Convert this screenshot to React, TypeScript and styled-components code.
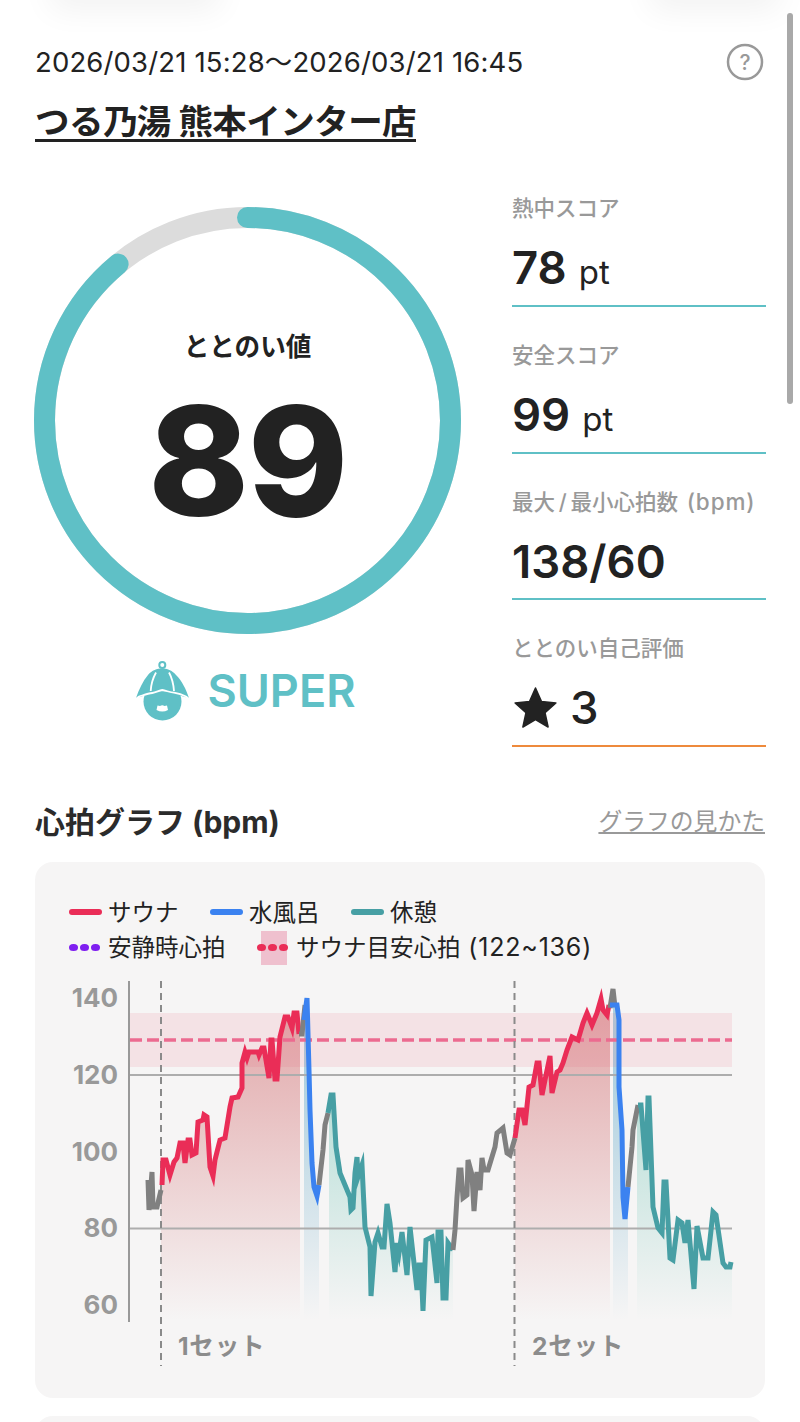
import styled, { createGlobalStyle } from 'styled-components'

const FONT = `Inter, "Noto Sans CJK JP", sans-serif`
const TEAL = '#5fc0c6'

const GlobalStyle = createGlobalStyle`
  html, body {
    margin: 0;
    padding: 0;
    background: #fff;
  }
  body {
    font-family: ${FONT};
    color: #222;
  }
`

const Page = styled.div`
  position: relative;
  width: 800px;
  height: 1422px;
  overflow: hidden;
  background: #fff;
  box-sizing: border-box;
  padding: 0 35px;
`
const TopShade = styled.div<{ $left: number; $width: number }>`
  position: absolute;
  top: -30px;
  left: ${p => p.$left}px;
  width: ${p => p.$width}px;
  height: 40px;
  background: #000;
  opacity: 0.05;
  filter: blur(16px);
`
const ScrollThumb = styled.div`
  position: absolute;
  top: 13px;
  left: 787px;
  width: 6px;
  height: 391px;
  border-radius: 3px;
  background: #a9a9a9;
`
const DateRow = styled.div`
  display: flex;
  align-items: center;
  justify-content: space-between;
  padding-top: 44px;
  height: 36px;
`
const DateText = styled.div`
  font-size: 27.5px;
  line-height: 36px;
  letter-spacing: 0.15px;
  white-space: nowrap;
  color: #222;
`
const HelpIcon = styled.svg`
  width: 38px;
  height: 38px;
  margin-right: 1px;
`
const StoreName = styled.a`
  display: block;
  width: fit-content;
  margin-top: 18px;
  padding-top: 4px;
  font-size: 34.5px;
  line-height: 40px;
  font-weight: 700;
  letter-spacing: -0.55px;
  color: #222;
  white-space: nowrap;
  border-bottom: 3px solid #222;
  height: 44px;
  box-sizing: border-box;
`
const Summary = styled.div`
  display: flex;
  justify-content: space-between;
  margin-top: 50px;
`
const RingColumn = styled.div`
  width: 427px;
  margin-left: -1px;
  padding-top: 15px;
  display: flex;
  flex-direction: column;
  align-items: center;
`
const RingBox = styled.div`
  position: relative;
  width: 427px;
  height: 427px;
`
const RingSvg = styled.svg`
  display: block;
  width: 427px;
  height: 427px;
`
const RingContent = styled.div`
  position: absolute;
  inset: 0;
  display: flex;
  flex-direction: column;
  align-items: center;
`
const RingLabel = styled.div`
  margin-top: 122px;
  font-size: 25.6px;
  line-height: 36px;
  font-weight: 700;
  color: #222;
`
const RingValue = styled.div`
  margin-top: 36px;
  font-size: 152px;
  line-height: 120px;
  font-weight: 800;
  letter-spacing: -1.5px;
  color: #222;
`
const Rank = styled.div`
  display: flex;
  align-items: center;
  gap: 17px;
  margin-top: 26px;
  margin-right: 3px;
`
const RankText = styled.div`
  font-size: 45px;
  line-height: 62px;
  font-weight: 600;
  color: ${TEAL};
`
const Scores = styled.div`
  width: 254px;
  margin-right: -1px;
  display: flex;
  flex-direction: column;
`
const Score = styled.div<{ $line: string }>`
  height: 146.5px;
  box-sizing: border-box;
  border-bottom: 2px solid ${p => p.$line};
  padding-top: 33px;
  &:first-child {
    height: 115px;
    padding-top: 1px;
  }
`
const ScoreLabel = styled.div`
  font-size: 21.5px;
  line-height: 30px;
  font-weight: 500;
  color: #999;
  white-space: nowrap;
`
const ScoreLabelUnit = styled.span`
  margin-left: 3px;
  font-size: 22.5px;
  letter-spacing: 0.9px;
`
const ScoreValue = styled.div`
  display: flex;
  align-items: baseline;
  gap: 12px;
  margin-top: 17px;
  font-size: 45.5px;
  line-height: 56px;
  font-weight: 600;
  color: #222;
`
const ScoreUnit = styled.span`
  font-size: 33px;
  font-weight: 400;
`
const StarValue = styled(ScoreValue)`
  align-items: center;
  gap: 13px;
  padding-left: 2px;
  font-weight: 500;
`
const GraphHead = styled.div`
  display: flex;
  align-items: center;
  justify-content: space-between;
  margin-top: 55px;
  height: 40px;
`
const GraphTitle = styled.h2`
  margin: 0;
  font-size: 30px;
  line-height: 40px;
  font-weight: 700;
  color: #2b2b2b;
`
const GraphLink = styled.a`
  font-size: 23.8px;
  line-height: 32px;
  color: #999;
  text-decoration: underline;
`
const GraphCard = styled.section`
  margin-top: 20px;
  height: 536px;
  border-radius: 18px;
  background: #f6f5f5;
  padding-top: 33px;
  box-sizing: border-box;
`
const NextCard = styled.div`
  margin-top: 18px;
  height: 60px;
  border-radius: 18px;
  background: #f6f5f5;
`
const Legend = styled.div`
  display: flex;
  flex-direction: column;
  padding-left: 34px;
`
const LegendRow = styled.div`
  display: flex;
  align-items: center;
  height: 35px;
`
const LegendItem = styled.div<{ $width: number }>`
  display: flex;
  align-items: center;
  width: ${p => p.$width}px;
  font-size: 23.5px;
  line-height: 35px;
  color: #222;
  white-space: nowrap;
`
const LegendRange = styled.span`
  font-size: 25px;
  letter-spacing: 0.8px;
  white-space: pre;
`
const LegendBar = styled.span<{ $color: string }>`
  width: 33px;
  height: 6px;
  margin-right: 6px;
  border-radius: 3px;
  background: ${p => p.$color};
`
const LegendDots = styled.span<{ $color: string; $band?: boolean }>`
  position: relative;
  display: flex;
  gap: 2.5px;
  width: 31px;
  margin-right: 8px;
  color: ${p => p.$color};
  ${p => p.$band && `
    &::before {
      content: '';
      position: absolute;
      left: 4px;
      top: -13px;
      width: 26px;
      height: 34px;
      background: #efc0ce;
    }
  `}
`
const Dot = styled.i`
  position: relative;
  width: 8.5px;
  height: 7px;
  border-radius: 50%;
  background: currentColor;
`
const ChartSvg = styled.svg`
  display: block;
  width: 730px;
  height: 400px;
  margin-top: 10px;
`
const AxisText = styled.text`
  font-family: ${FONT};
  font-size: 26px;
  font-weight: 700;
  fill: #999;
  text-anchor: end;
`
const SetText = styled.text`
  font-family: ${FONT};
  font-size: 24.5px;
  font-weight: 700;
  letter-spacing: 0.8px;
  fill: #8c8c8c;
`

type Pt = [number, number]
type Seg = { color: string; pts: Pt[]; fill?: { x0: number; x1: number; id: string } }

const RED = '#ea2d57'
const BLUE = '#3b82f0'
const GREEN = '#479fa4'
const GRAY = '#808080'
const BOTTOM = 1320

const segments: Seg[] = [
  { color: GRAY, pts: [[148, 1180], [149, 1210], [152, 1172], [153, 1207], [157, 1207], [161, 1190]] },
  {
    color: RED,
    fill: { x0: 161, x1: 300, id: 'fillRed' },
    pts: [[162, 1185], [163, 1160], [166, 1160], [170, 1175], [174, 1162], [177, 1158], [180, 1143], [183, 1143], [185, 1163],
      [188, 1140], [190, 1140], [192, 1155], [196, 1153], [198, 1122], [203, 1120], [204, 1115], [207, 1117], [210, 1167],
      [213, 1176], [215, 1160], [220, 1140], [225, 1138], [230, 1107], [232, 1098], [238, 1097], [242, 1088], [242, 1063],
      [245, 1052], [247, 1058], [249, 1052], [258, 1052], [259, 1055], [262, 1048], [264, 1048], [269, 1078], [271, 1040],
      [272, 1040], [275, 1079], [277, 1079], [280, 1037], [285, 1017], [288, 1017], [292, 1028], [294, 1013], [297, 1013], [299, 1034]],
  },
  { color: GRAY, pts: [[299, 1034], [302, 1034], [305, 1005]] },
  {
    color: BLUE,
    fill: { x0: 304, x1: 319, id: 'fillBlue' },
    pts: [[304, 1020], [307, 998], [309, 1070], [310, 1110], [312, 1163], [314, 1187], [317, 1196], [319, 1185]],
  },
  { color: GRAY, pts: [[319, 1185], [323, 1150], [325, 1125], [328, 1113]] },
  {
    color: GREEN,
    fill: { x0: 329, x1: 453, id: 'fillGreen' },
    pts: [[328, 1113], [331, 1095], [333, 1095], [336, 1147], [340, 1173], [350, 1197], [351, 1210], [353, 1208], [355, 1173],
      [357, 1157], [358, 1177], [362, 1165], [365, 1227], [370, 1247], [371, 1296], [375, 1242], [378, 1233], [382, 1247],
      [384, 1247], [387, 1204], [390, 1223], [395, 1272], [397, 1243], [399, 1253], [402, 1232], [407, 1275], [410, 1227],
      [417, 1290], [419, 1265], [421, 1265], [423, 1311], [426, 1240], [432, 1237], [437, 1283], [438, 1232], [441, 1232],
      [443, 1298], [446, 1298], [448, 1243], [453, 1250]],
  },
  {
    color: GRAY,
    pts: [[453, 1250], [455, 1230], [457, 1197], [459, 1170], [461, 1170], [463, 1198], [467, 1195], [468, 1160], [472, 1175],
      [474, 1211], [477, 1172], [480, 1190], [482, 1158], [484, 1170], [488, 1170], [495, 1147], [497, 1133], [503, 1128],
      [507, 1153], [510, 1155], [515, 1138]],
  },
  {
    color: RED,
    fill: { x0: 515, x1: 610, id: 'fillRed' },
    pts: [[515, 1138], [519, 1110], [522, 1110], [525, 1125], [529, 1087], [533, 1085], [537, 1063], [539, 1063], [542, 1095],
      [545, 1080], [550, 1056], [552, 1093], [557, 1072], [560, 1070], [563, 1063], [567, 1050], [572, 1037], [578, 1040],
      [583, 1023], [587, 1013], [592, 1025], [597, 1013], [601, 999], [603, 1010], [607, 1015], [609, 1005]],
  },
  { color: GRAY, pts: [[610, 1008], [613, 989], [615, 1007]] },
  {
    color: BLUE,
    fill: { x0: 613, x1: 628, id: 'fillBlue' },
    pts: [[610, 1005], [617, 1005], [619, 1020], [619, 1087], [622, 1130], [623, 1197], [625, 1219], [628, 1187]],
  },
  { color: GRAY, pts: [[628, 1187], [632, 1147], [633, 1130], [638, 1105]] },
  {
    color: GREEN,
    fill: { x0: 637, x1: 732, id: 'fillGreen' },
    pts: [[638, 1105], [641, 1105], [646, 1170], [648, 1098], [649, 1098], [653, 1207], [658, 1228], [662, 1233], [664, 1182],
      [666, 1182], [670, 1258], [673, 1260], [678, 1220], [682, 1223], [685, 1243], [688, 1220], [690, 1243], [694, 1289],
      [697, 1226], [703, 1258], [708, 1258], [713, 1212], [716, 1215], [723, 1263], [726, 1267], [730, 1267], [731, 1262]],
  },
]

const toPoints = (pts: Pt[]) => pts.map(p => p.join(',')).join(' ')

const areaPoints = ({ pts, fill }: Seg) => {
  if (!fill) return ''
  const inside = pts.filter(p => p[0] >= fill.x0 && p[0] <= fill.x1)
  const first = inside[0][1]
  const last = inside[inside.length - 1][1]
  return toPoints([[fill.x0, BOTTOM], [fill.x0, first], ...inside, [fill.x1, last], [fill.x1, BOTTOM]])
}

const yLabels: [string, number][] = [['140', 1007], ['120', 1084], ['100', 1161], ['80', 1237], ['60', 1314]]

const Chart = () => (
  <ChartSvg viewBox="35 975 730 400">
    <defs>
      <linearGradient id="fillRed" gradientUnits="userSpaceOnUse" x1="0" y1="1000" x2="0" y2={BOTTOM}>
        <stop offset="0" stopColor="#c8474b" stopOpacity="0.46" />
        <stop offset="1" stopColor="#c8474b" stopOpacity="0" />
      </linearGradient>
      <linearGradient id="fillBlue" gradientUnits="userSpaceOnUse" x1="0" y1="1060" x2="0" y2={BOTTOM}>
        <stop offset="0" stopColor="#5fa8c8" stopOpacity="0.5" />
        <stop offset="1" stopColor="#5fa8c8" stopOpacity="0" />
      </linearGradient>
      <linearGradient id="fillGreen" gradientUnits="userSpaceOnUse" x1="0" y1="1090" x2="0" y2={BOTTOM}>
        <stop offset="0" stopColor="#5fbfae" stopOpacity="0.42" />
        <stop offset="1" stopColor="#5fbfae" stopOpacity="0" />
      </linearGradient>
    </defs>

    {segments.filter(s => s.fill).map((s, i) => (
      <polygon key={i} points={areaPoints(s)} fill={`url(#${s.fill!.id})`} />
    ))}

    <rect x="130" y="1013" width="602" height="54" fill="#e8647f" fillOpacity="0.13" />
    <line x1="130" y1="1040" x2="732" y2="1040" stroke="#ec6b90" strokeWidth="3.5" strokeDasharray="12 5" />
    <line x1="130" y1="1075" x2="732" y2="1075" stroke="#adadad" strokeWidth="2" />
    <line x1="130" y1="1228.5" x2="732" y2="1228.5" stroke="#adadad" strokeWidth="2" />
    <line x1="129" y1="981" x2="129" y2="1322" stroke="#999" strokeWidth="2" />

    {[161, 514.5].map(x => (
      <line key={x} x1={x} y1="981" x2={x} y2="1366" stroke="#8a8a8a" strokeWidth="2" strokeDasharray="7 5" />
    ))}

    {segments.map((s, i) => (
      <polyline
        key={i}
        points={toPoints(s.pts)}
        fill="none"
        stroke={s.color}
        strokeWidth="5"
        strokeLinejoin="miter"
        strokeMiterlimit="6"
      />
    ))}

    {yLabels.map(([label, y]) => (
      <AxisText key={label} x="118" y={y}>{label}</AxisText>
    ))}
    <SetText x="178" y="1355">1セット</SetText>
    <SetText x="532" y="1355">2セット</SetText>
  </ChartSvg>
)

const HatIcon = () => (
  <svg width="54" height="62" viewBox="0 0 54 62">
    <circle cx="26.3" cy="5" r="3" fill="none" stroke={TEAL} strokeWidth="2" />
    <path d="M0 38 C3 29 7 21 12 15 C16 10 21 8.5 26 8.5 C31 8.5 36 10 40 15 C46 21 50 29 53 38 L38 34 L26 32 L14 34 Z" fill={TEAL} />
    <circle cx="26.5" cy="41.5" r="19" fill={TEAL} />
    <path d="M0 39 L3 36.5 C8 35 12 33.5 16.3 33 C20 32.5 23 30.5 26.3 30 C30 30.5 34 32.5 38 32.7 C43 33.5 47 35 50 36.5 L53 39" fill="none" stroke="#fff" strokeWidth="1.8" />
    <path d="M14.7 31 C15 24 17 18 20 12.5 M38 31 C37.5 24 36 18 33 12.5" fill="none" stroke="#fff" strokeWidth="1.8" />
    <path d="M21.5 45.5 L24 46 Q26.3 44.5 28.5 46 L31 45.5 L32 50 Q26.3 53 20.5 50 Z" fill="#fff" />
  </svg>
)

const StarIcon = () => (
  <svg width="43" height="42" viewBox="0 0 43 42">
    <path
      d="M21.5 1 L27.4 14.4 L41.9 15.9 L31 25.7 L34.1 40 L21.5 32.6 L8.9 40 L12 25.7 L1.1 15.9 L15.6 14.4 Z"
      fill="#222"
      stroke="#222"
      strokeWidth="1.5"
      strokeLinejoin="round"
    />
  </svg>
)

const App = () => (
  <Page>
    <GlobalStyle />
    <TopShade $left={50} $width={170} />
    <TopShade $left={650} $width={130} />
    <ScrollThumb />

    <DateRow>
      <DateText>2026/03/21 15:28～2026/03/21 16:45</DateText>
      <HelpIcon viewBox="0 0 38 38">
        <circle cx="19" cy="19" r="17" fill="none" stroke="#999" strokeWidth="2.5" />
        <text x="19" y="26.5" textAnchor="middle" fontSize="21" fontWeight="500" fill="#999" fontFamily={FONT}>?</text>
      </HelpIcon>
    </DateRow>
    <StoreName>つる乃湯 熊本インター店</StoreName>

    <Summary>
      <RingColumn>
        <RingBox>
          <RingSvg viewBox="0 0 427 427">
            <circle cx="213.5" cy="213.5" r="203" fill="none" stroke="#dcdcdc" strokeWidth="21" />
            <circle
              cx="213.5"
              cy="213.5"
              r="203"
              fill="none"
              stroke={TEAL}
              strokeWidth="21"
              strokeLinecap="round"
              pathLength={100}
              strokeDasharray="89 100"
              transform="rotate(-90 213.5 213.5)"
            />
          </RingSvg>
          <RingContent>
            <RingLabel>ととのい値</RingLabel>
            <RingValue>89</RingValue>
          </RingContent>
        </RingBox>
        <Rank>
          <HatIcon />
          <RankText>SUPER</RankText>
        </Rank>
      </RingColumn>

      <Scores>
        <Score $line={TEAL}>
          <ScoreLabel>熱中スコア</ScoreLabel>
          <ScoreValue>78<ScoreUnit>pt</ScoreUnit></ScoreValue>
        </Score>
        <Score $line={TEAL}>
          <ScoreLabel>安全スコア</ScoreLabel>
          <ScoreValue>99<ScoreUnit>pt</ScoreUnit></ScoreValue>
        </Score>
        <Score $line={TEAL}>
          <ScoreLabel>最大&#8201;/&#8201;最小心拍数 <ScoreLabelUnit>(bpm)</ScoreLabelUnit></ScoreLabel>
          <ScoreValue>138/60</ScoreValue>
        </Score>
        <Score $line="#ee8a3c">
          <ScoreLabel>ととのい自己評価</ScoreLabel>
          <StarValue><StarIcon />3</StarValue>
        </Score>
      </Scores>
    </Summary>

    <GraphHead>
      <GraphTitle>心拍グラフ (bpm)</GraphTitle>
      <GraphLink>グラフの見かた</GraphLink>
    </GraphHead>

    <GraphCard>
      <Legend>
        <LegendRow>
          <LegendItem $width={141}><LegendBar $color={RED} />サウナ</LegendItem>
          <LegendItem $width={141}><LegendBar $color={BLUE} />水風呂</LegendItem>
          <LegendItem $width={100}><LegendBar $color={GREEN} />休憩</LegendItem>
        </LegendRow>
        <LegendRow>
          <LegendItem $width={188}>
            <LegendDots $color="#7f1ff0"><Dot /><Dot /><Dot /></LegendDots>
            安静時心拍
          </LegendItem>
          <LegendItem $width={340}>
            <LegendDots $color={RED} $band><Dot /><Dot /><Dot /></LegendDots>
            サウナ目安心拍<LegendRange> (122~136)</LegendRange>
          </LegendItem>
        </LegendRow>
      </Legend>
      <Chart />
    </GraphCard>
    <NextCard />
  </Page>
)

export default App
